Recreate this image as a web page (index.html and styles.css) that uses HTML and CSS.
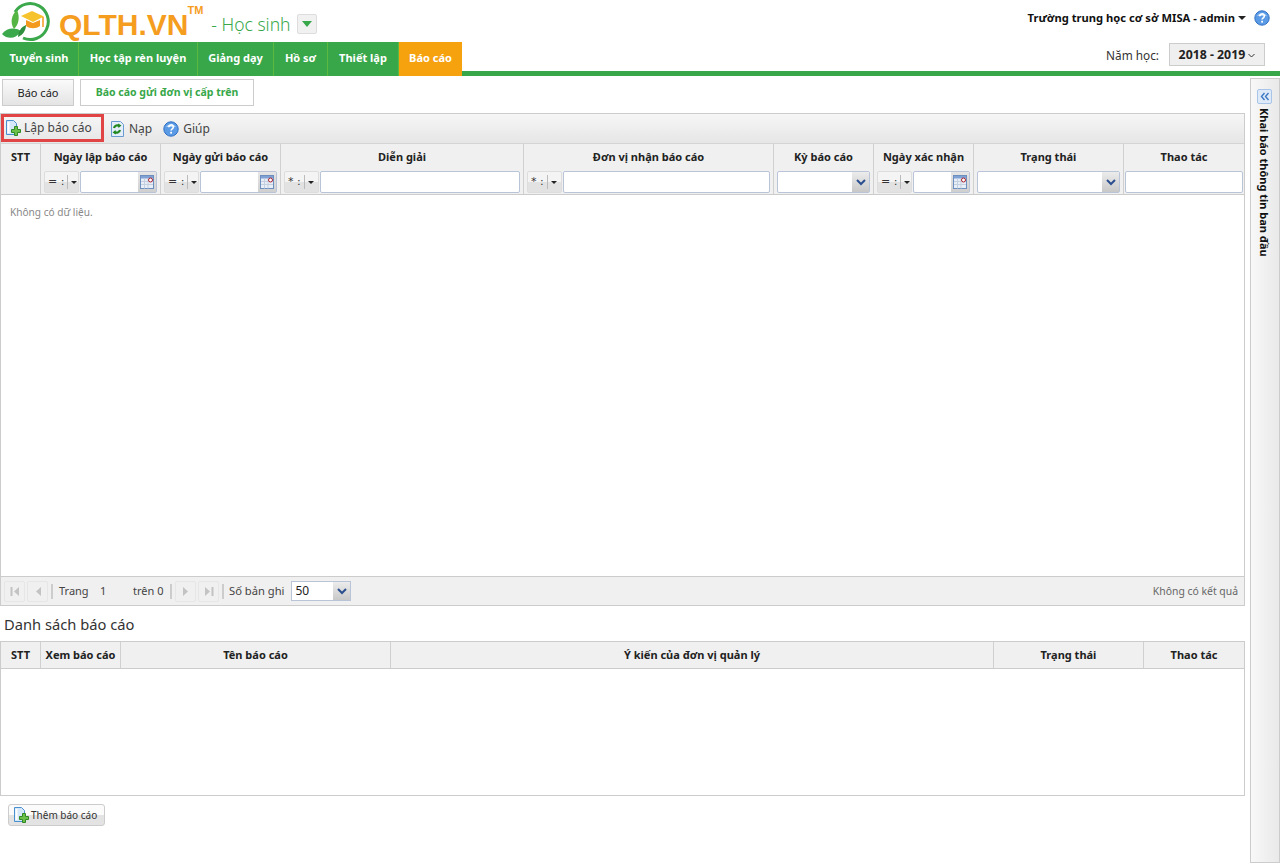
FILE: index.html
```html
<!DOCTYPE html>
<html lang="vi">
<head>
<meta charset="utf-8">
<title>QLTH.VN - Báo cáo</title>
<link rel="stylesheet" href="styles.css">
</head>
<body>
<svg class="defs" width="0" height="0" aria-hidden="true">
  <defs>
    <symbol id="ico-add" viewBox="0 0 16 16">
      <path d="M1.500.5h7l3 3v11h-10z" fill="#d5e8f9" stroke="#4a90cf"/>
      <path d="M3.500 2v11" stroke="#fff" stroke-width="2"/>
      <path d="M6.500 9.500h3v-3h3v3h3v3h-3v3h-3v-3h-3z" fill="#6cc04a" stroke="#2f8a25"/>
    </symbol>
    <symbol id="ico-help" viewBox="0 0 16 16">
      <circle cx="8" cy="8" r="7.200" fill="#5b9be6" stroke="#2f6fc4"/>
      <path d="M3 6a5.500 4.500 0 0 1 10 0z" fill="#a9cdf5"/>
      <path d="M5.800 6.200c0-3 4.600-3 4.600-.2 0 1.900-2.300 1.800-2.300 3.600" fill="none" stroke="#fff" stroke-width="1.600"/>
      <rect x="7.200" y="10.800" width="1.800" height="1.800" fill="#fff"/>
    </symbol>
    <symbol id="ico-cal" viewBox="0 0 14 14">
      <rect x=".5" y=".5" width="13" height="13" fill="#e8eef8" stroke="#6d8fc0"/>
      <rect x="1" y="1" width="12" height="2.500" fill="#7fa1d4"/>
      <path d="M1 6.500h12M1 9.500h12M4.500 3.500v10M8 3.500v10" stroke="#c4cfe0"/>
      <circle cx="10.500" cy="5" r="2" fill="#fff" stroke="#a8202a"/>
    </symbol>
  </defs>
</svg>

<header class="top">
  <div class="brand">
    <svg class="logo" width="58" height="42" viewBox="0 0 58 42">
      <path d="M15 12A18 18 0 1 1 23 38" fill="none" stroke="#3aa84b" stroke-width="3"/>
      <path d="M32 11L44 16.500 33 22 21 16z" fill="#f7c32c"/>
      <path d="M26 20l7 3 7-3v6c-4 3-10 3-14 0z" fill="#f39a1e"/>
      <path d="M43 17v10" stroke="#f39a1e" stroke-width="1.500"/>
      <path d="M2 34c5-6 12-7 19-3-5 8-13 9-19 3z" fill="#3aa84b"/>
      <path d="M14 29c-4-6-3-14 3-19 3 7 2 14-3 19z" fill="#55b544"/>
      <path d="M18 37c0-5 3-10 8-12 0 5-3 10-8 12z" fill="#2f8f3e"/>
    </svg>
    <span class="wordmark">QLTH.VN</span><span class="tm">TM</span>
    <span class="module">- Học sinh</span>
    <span class="module-btn"><i class="tri-green"></i></span>
  </div>
  <div class="user">
    <span class="user-name">Trường trung học cơ sở MISA - admin</span>
    <i class="tri-black"></i>
    <svg class="help-top" width="16" height="16"><use href="#ico-help"/></svg>
  </div>
</header>

<nav class="nav">
  <div class="tabs">
    <a class="tab t1">Tuyển sinh</a>
    <a class="tab t2">Học tập rèn luyện</a>
    <a class="tab t3">Giảng dạy</a>
    <a class="tab t4">Hồ sơ</a>
    <a class="tab t5">Thiết lập</a>
    <a class="tab t6 active">Báo cáo</a>
  </div>
  <div class="year">
    <span>Năm học:</span>
    <span class="year-btn">2018 - 2019 <svg width="7" height="5" viewBox="0 0 7 5"><path d="M.5 1l3 3 3-3" fill="none" stroke="#333"/></svg></span>
  </div>
</nav>

<div class="page">
  <main class="main">
    <div class="subtabs">
      <button class="sub sub-a">Báo cáo</button>
      <button class="sub sub-b">Báo cáo gửi đơn vị cấp trên</button>
    </div>

    <section class="grid-box">
      <div class="toolbar">
        <span class="tool tool-add"><svg width="16" height="16"><use href="#ico-add"/></svg>Lập báo cáo</span>
        <span class="tool tool-reload">
          <svg width="16" height="16" viewBox="0 0 16 16"><path d="M.5.5h9l3 3v12H.5z" fill="#e3eefa" stroke="#6a9bd0"/><path d="M3 7a3.500 3.500 0 0 1 5.500-2M9 9a3.500 3.500 0 0 1-5.500 2" fill="none" stroke="#23881f" stroke-width="2.200"/><path d="M7 2.500l3.500 2-3 2.500zM5 13.500l-3.500-2 3-2.500z" fill="#23881f"/></svg>Nạp</span>
        <span class="tool tool-help"><svg width="16" height="16"><use href="#ico-help"/></svg>Giúp</span>
      </div>

      <div class="head head-top">
        <div class="hc"><div class="ht">STT</div></div>
        <div class="hc"><div class="ht">Ngày lập báo cáo</div>
          <div class="filter"><span class="op">= :<i class="sep"></i><i class="tri-black small"></i></span><span class="fi"><b class="fi-in"></b><span class="cal"><svg width="14" height="14"><use href="#ico-cal"/></svg></span></span></div></div>
        <div class="hc"><div class="ht">Ngày gửi báo cáo</div>
          <div class="filter"><span class="op">= :<i class="sep"></i><i class="tri-black small"></i></span><span class="fi"><b class="fi-in"></b><span class="cal"><svg width="14" height="14"><use href="#ico-cal"/></svg></span></span></div></div>
        <div class="hc"><div class="ht">Diễn giải</div>
          <div class="filter"><span class="op">* :<i class="sep"></i><i class="tri-black small"></i></span><span class="fi"><b class="fi-in"></b></span></div></div>
        <div class="hc"><div class="ht">Đơn vị nhận báo cáo</div>
          <div class="filter"><span class="op">* :<i class="sep"></i><i class="tri-black small"></i></span><span class="fi"><b class="fi-in"></b></span></div></div>
        <div class="hc"><div class="ht">Kỳ báo cáo</div>
          <div class="filter"><span class="fi"><b class="fi-in"></b><span class="combo"><svg width="10" height="7" viewBox="0 0 10 7"><path d="M1 1l4 4 4-4" fill="none" stroke="#2b4f8e" stroke-width="2"/></svg></span></span></div></div>
        <div class="hc"><div class="ht">Ngày xác nhận</div>
          <div class="filter"><span class="op">= :<i class="sep"></i><i class="tri-black small"></i></span><span class="fi"><b class="fi-in"></b><span class="cal"><svg width="14" height="14"><use href="#ico-cal"/></svg></span></span></div></div>
        <div class="hc"><div class="ht">Trạng thái</div>
          <div class="filter"><span class="fi"><b class="fi-in"></b><span class="combo"><svg width="10" height="7" viewBox="0 0 10 7"><path d="M1 1l4 4 4-4" fill="none" stroke="#2b4f8e" stroke-width="2"/></svg></span></span></div></div>
        <div class="hc"><div class="ht">Thao tác</div>
          <div class="filter filter-last"><span class="fi"><b class="fi-in"></b></span></div></div>
      </div>

      <div class="body-top"><p class="empty">Không có dữ liệu.</p></div>

      <div class="pager">
        <span class="pg"><svg width="10" height="11" viewBox="0 0 10 11"><path d="M1.500 1v9" stroke="#c3c3c3" stroke-width="2"/><path d="M9 1v9L4 5.500z" fill="#c3c3c3"/></svg></span>
        <span class="pg"><svg width="10" height="11" viewBox="0 0 10 11"><path d="M8 1v9L3 5.500z" fill="#c3c3c3"/></svg></span>
        <i class="pg-sep"></i>
        <span class="pg-t pg-page">Trang</span><span class="pg-t pg-num">1</span><span class="pg-t pg-of">trên 0</span>
        <i class="pg-sep"></i>
        <span class="pg"><svg width="10" height="11" viewBox="0 0 10 11"><path d="M2 1v9l5-4.500z" fill="#c3c3c3"/></svg></span>
        <span class="pg"><svg width="10" height="11" viewBox="0 0 10 11"><path d="M1 1v9l5-4.500z" fill="#c3c3c3"/><path d="M8.500 1v9" stroke="#c3c3c3" stroke-width="2"/></svg></span>
        <i class="pg-sep"></i>
        <span class="pg-t pg-rec">Số bản ghi</span>
        <span class="pg-combo"><span class="pg-val">50</span><span class="combo"><svg width="10" height="7" viewBox="0 0 10 7"><path d="M1 1l4 4 4-4" fill="none" stroke="#2b4f8e" stroke-width="2"/></svg></span></span>
        <span class="pg-result">Không có kết quả</span>
      </div>
    </section>

    <h2 class="list-title">Danh sách báo cáo</h2>

    <section class="list-box">
      <div class="head head-list">
        <div class="hc"><div class="ht">STT</div></div>
        <div class="hc"><div class="ht">Xem báo cáo</div></div>
        <div class="hc"><div class="ht">Tên báo cáo</div></div>
        <div class="hc"><div class="ht">Ý kiến của đơn vị quản lý</div></div>
        <div class="hc"><div class="ht">Trạng thái</div></div>
        <div class="hc"><div class="ht">Thao tác</div></div>
      </div>
    </section>

    <button class="add-btn"><svg width="16" height="16"><use href="#ico-add"/></svg>Thêm báo cáo</button>
  </main>

  <aside class="side">
    <span class="collapse"><svg width="10" height="9" viewBox="0 0 10 9"><path d="M4.500 1L1.500 4.500l3 3.500M8.500 1l-3 3.500 3 3.500" fill="none" stroke="#3c78c4" stroke-width="1.400"/></svg></span>
    <span class="side-title">Khai báo thông tin ban đầu</span>
  </aside>
</div>
</body>
</html>
```
FILE: styles.css
```css
* { box-sizing: border-box; }
html, body { margin: 0; padding: 0; }
body {
  width: 1280px;
  height: 864px;
  overflow: hidden;
  background: #fff;
  color: #333;
  font: 12px/14px "DejaVu Sans", "Noto Sans", sans-serif;
}
.defs { position: absolute; }

.top { height: 42px; display: flex; justify-content: space-between; }
.brand { display: flex; align-items: center; width: 400px; }
.logo { flex: none; }
.wordmark {
  font: bold 30px/42px "Liberation Sans", sans-serif;
  color: #f59d1f;
  margin: 7px 0 0 1px;
}
.tm {
  font: bold 11px/10px "Liberation Sans", sans-serif;
  color: #f59d1f;
  align-self: flex-start;
  margin: 5px 0 0 -1px;
}
.module {
  font: 300 17.500px/20px "Noto Sans", sans-serif;
  color: #37a74a;
  margin: 6px 0 0 8px;
}
.module-btn {
  width: 20px; height: 20px;
  margin: 6px 0 0 6px;
  background: #f1f1f1;
  border: 1px solid #ddd;
  border-radius: 2px;
  display: flex; align-items: center; justify-content: center;
}
.tri-green { width: 0; height: 0; border: 5px solid transparent; border-top: 6px solid #37a74a; border-bottom: 0; }

.user { display: flex; align-items: flex-start; padding: 10px 10px 0 0; }
.user-name { font: bold 11.200px/16px "Noto Sans", sans-serif; color: #111; white-space: nowrap; }
.tri-black { display: inline-block; width: 0; height: 0; border: 4px solid transparent; border-top: 4px solid #222; border-bottom: 0; margin: 6px 0 0 3px; }
.tri-black.small { border-width: 3px 3px 0; margin: 0 0 0 3px; }
.help-top { margin: 0 0 0 8px; }

.nav {
  height: 34px;
  display: flex;
  justify-content: space-between;
  background: linear-gradient(#fff 29px, #37a74a 29px);
}
.tabs { display: flex; gap: 1px; }
.tab {
  height: 34px;
  background: #37a74a;
  color: #fff;
  font: bold 11px/32px "Noto Sans", sans-serif;
  text-align: center;
  white-space: nowrap;
}
.t1 { width: 78px; } .t2 { width: 118px; } .t3 { width: 75px; }
.t4 { width: 53px; } .t5 { width: 70px; } .t6 { width: 63px; }
.tabs .tab + .tab { box-shadow: -1px 0 0 #5cb83e; }
.tab.active { background: #f6a20e; box-shadow: none; }

.year { display: flex; align-items: flex-start; padding: 1px 15px 0 0; gap: 10px; }
.year > span:first-child { font: 11.800px/24px "Noto Sans", sans-serif; color: #333; }
.year-btn {
  width: 96px; height: 23px;
  background: #efefef;
  border: 1px solid #ccc;
  font: bold 12.300px/21px "Noto Sans", sans-serif;
  color: #222;
  text-align: center;
  white-space: nowrap;
}
.year-btn svg { vertical-align: 1px; }

.page { display: flex; height: 788px; }
.main { width: 1245px; flex: none; }
.side {
  width: 30px;
  margin: 2px 0 0 5px;
  height: 785px;
  background: linear-gradient(90deg, #f8f8f8, #e9e9e9);
  border: 1px solid #ccc;
  padding: 10px 0 0 6px;
  display: flex;
  flex-direction: column;
}
.collapse {
  width: 15px; height: 15px;
  background: #dfeaf8;
  border: 1px solid #a8c4e8;
  border-radius: 2px;
  display: flex; align-items: center; justify-content: center;
}
.side-title {
  writing-mode: vertical-rl;
  align-self: flex-start;
  font: bold 11px/15px "Noto Sans", sans-serif;
  color: #111;
  margin: 4px 0 0 0;
  white-space: nowrap;
}

.subtabs { display: flex; gap: 6px; padding: 3px 0 0 2px; height: 37px; }
.sub {
  height: 27px;
  padding: 0;
  font: 11px/25px "Noto Sans", sans-serif;
  color: #222;
  border: 1px solid #ccc;
}
.sub-a { width: 72px; background: linear-gradient(#fafafa, #e4e4e4); }
.sub-b { width: 174px; background: #fff; color: #37a74a; font-weight: bold; font-size: 10.500px; }

.grid-box { border: 1px solid #ccc; height: 493px; display: flex; flex-direction: column; }
.toolbar {
  height: 29px; flex: none;
  display: flex; align-items: center;
  background: linear-gradient(#f6f6f6, #e6e6e6);
  font: 12px/16px "Noto Sans", sans-serif;
  color: #444;
}
.tool { display: flex; align-items: center; white-space: nowrap; }
.tool-add {
  height: 28px;
  width: 103px;
  align-self: flex-start;
  gap: 3px;
  padding-left: 1px;
  border: 3px solid #e14444;
}
.tool-reload { margin-left: 7px; gap: 2px; }
.tool-help { margin-left: 11px; gap: 4px; }

.head { display: grid; background: #f0f0f0; border-bottom: 1px solid #ccc; }
.head-top { grid-template-columns: 40px 120px 120px 243px 250px 100px 100px 150px 120px; height: 52px; flex: none; border-top: 1px solid #d4d4d4; }
.head-list { grid-template-columns: 40px 80px 270px 603px 150px 100px; height: 27px; }
.hc { border-right: 1px solid #d0d0d0; min-width: 0; }
.hc:last-child { border-right: 0; }
.ht {
  font: bold 11px/26px "Noto Sans", sans-serif;
  color: #222;
  text-align: center;
  white-space: nowrap;
}
.filter { display: flex; gap: 1px; padding: 1px 3px 0; height: 24px; }
.filter-last { padding: 1px 1px 0 1px; }
.op {
  width: 35px; height: 22px; flex: none;
  border-radius: 2px;
  border: 1px solid #ddd;
  background: linear-gradient(#f4f4f4 50%, #e2e2e2 50%);
  display: flex; align-items: center;
  padding-left: 3px;
  font: 11px/20px "DejaVu Sans", sans-serif;
  color: #333;
  white-space: nowrap;
}
.sep { width: 1px; height: 14px; background: #bbb; margin-left: 3px; }
.fi {
  flex: 1; min-width: 0; height: 22px;
  display: flex;
  background: #fff;
  border: 1px solid #b9c4d8;
  border-radius: 2px;
}
.fi-in { flex: 1; }
.cal {
  width: 18px;
  background: linear-gradient(#e6e6e6, #cfcfcf);
  display: flex; align-items: center; justify-content: center;
}
.combo {
  width: 17px;
  background: linear-gradient(#ececec, #c8c8c8);
  display: flex; align-items: center; justify-content: center;
  flex: none;
}

.body-top { flex: 1; background: #fff; }
.empty { margin: 0; padding: 10px 9px; font: 10.100px/14px "Noto Sans", sans-serif; color: #888; }

.pager {
  height: 29px; flex: none;
  display: flex; align-items: center;
  background: #f0f0f0;
  border-top: 1px solid #ccc;
  padding-left: 3px;
  font: 11px/14px "Noto Sans", sans-serif;
  color: #444;
}
.pg {
  width: 21px; height: 21px;
  border: 1px solid #e6e6e6;
  border-radius: 2px;
  display: flex; align-items: center; justify-content: center;
  margin-right: 2px;
}
.pg-sep { width: 2px; height: 15px; background: #ccc; margin: 0 3px 0 1px; }
.pg-t { white-space: nowrap; }
.pg-page { margin-left: 3px; width: 41px; }
.pg-num { width: 33px; }
.pg-of { width: 36px; }
.pg-rec { margin: 0 7px 0 2px; font-size: 11.200px; }
.pg-combo {
  width: 60px; height: 20px;
  display: flex;
  background: #fff;
  border: 1px solid #b9c4d8;
}
.pg-val { flex: 1; padding-left: 3px; font: 12px/18px "Noto Sans", sans-serif; color: #222; }
.pg-result { margin-left: auto; padding-right: 6px; font-size: 10.400px; color: #666; }

.list-title {
  margin: 0;
  height: 35px;
  padding: 9px 0 0 4px;
  font: 400 14.700px/18px "Noto Sans", sans-serif;
  color: #333;
}
.list-box { border: 1px solid #ccc; height: 155px; }

.add-btn {
  display: flex; align-items: center; gap: 2px;
  margin: 8px 0 0 8px;
  width: 97px; height: 22px;
  padding: 0 0 0 4px;
  border: 1px solid #ccc;
  border-radius: 3px;
  background: linear-gradient(#fbfbfb 50%, #e3e3e3 50%);
  font: 10px/14px "Noto Sans", sans-serif;
  color: #333;
  white-space: nowrap;
}
```
